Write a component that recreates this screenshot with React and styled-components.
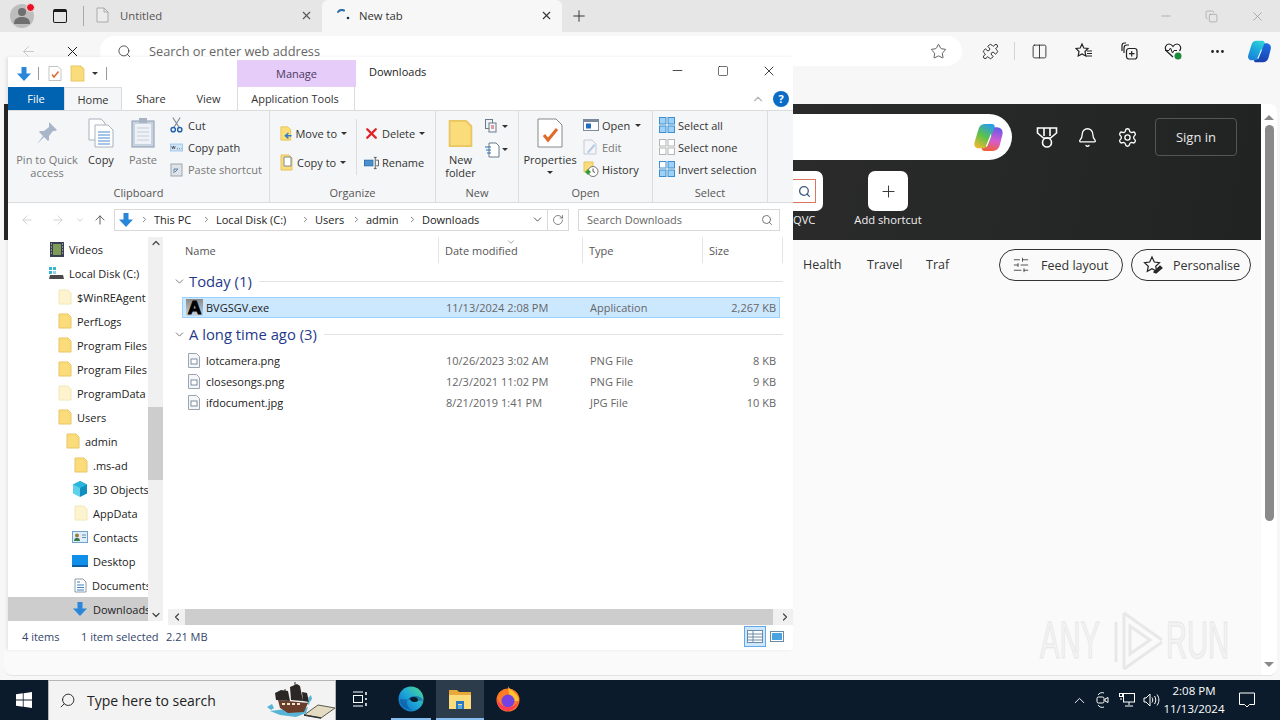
import React from "react";
import styled, { createGlobalStyle } from "styled-components";
import {
  X, ArrowLeft, ArrowRight, ArrowUp, Star, Puzzle, Plus, Search, Bell, Settings,
  ChevronUp, ChevronDown, ChevronLeft, ChevronRight, Minus, Square, Ellipsis, RotateCw,
  Columns2, SlidersHorizontal, Copy,
} from "lucide-react";

const Global = createGlobalStyle`
  html, body { margin: 0; padding: 0; width: 1280px; height: 720px; overflow: hidden; background: #f7f7f7; }
  body { font-family: "Open Sans", "Liberation Sans", sans-serif; font-size: 12px; color: #222; }
  * { box-sizing: border-box; }
`;

const Screen = styled.div`
  position: relative;
  width: 1280px;
  height: 720px;
  display: flex;
  flex-direction: column;
  overflow: hidden;
`;

/* ---------- browser ---------- */
const TabStrip = styled.div`
  height: 32px;
  background: #e6e6e6;
  display: flex;
  align-items: center;
  flex: none;
`;
const Avatar = styled.div`
  position: relative;
  width: 24px;
  height: 24px;
  margin-left: 10px;
  border-radius: 50%;
  background: #bdbdbd;
  display: flex;
  align-items: center;
  justify-content: center;
  &::after {
    content: "";
    position: absolute;
    top: -1px;
    right: -1px;
    width: 7px;
    height: 7px;
    border-radius: 50%;
    background: #e81123;
    border: 1px solid #eee;
  }
`;
const VerticalTabs = styled.div`
  width: 14px;
  height: 14px;
  margin-left: 19px;
  border: 1.6px solid #1a1a1a;
  border-top-width: 3px;
  border-radius: 2px;
`;
const TabDivider = styled.div`
  width: 1px;
  height: 20px;
  margin-left: 16px;
  background: #a8a8a8;
`;
const Tab = styled.div`
  width: ${p => p.$w}px;
  height: 32px;
  display: flex;
  align-items: center;
  padding: 0 9px 2px ${p => (p.$active ? 15 : 12)}px;
  background: ${p => (p.$active ? "#f7f7f7" : "transparent")};
  border-radius: 6px 6px 0 0;
  color: ${p => (p.$active ? "#333" : "#555")};
  font-size: 11.3px;
`;
const TabTitle = styled.span`
  flex: 1;
  margin-left: ${p => p.$ml}px;
`;
const NewTab = styled.div`
  margin-left: 8px;
  display: flex;
  color: #333;
`;
const WinControls = styled.div`
  margin-left: auto;
  display: flex;
  color: #8c8c8c;
  gap: 32px;
  padding-right: 15px;
  align-items: center;
`;
const Toolbar = styled.div`
  height: 38px;
  flex: none;
  display: flex;
  align-items: center;
  padding-left: 20px;
  background: #f7f7f7;
`;
const NavBtn = styled.div`
  width: ${p => p.$w || 44}px;
  display: flex;
  color: ${p => p.$c || "#1a1a1a"};
`;
const AddressPill = styled.div`
  width: 862px;
  height: 30px;
  margin-left: -8px;
  border-radius: 15px;
  background: #fff;
  display: flex;
  align-items: center;
  padding: 0 15px 0 17px;
  color: #666;
  font-size: 12.8px;
`;
const AddressText = styled.span`
  flex: 1;
  margin-left: 17px;
`;
const ToolIcons = styled.div`
  display: flex;
  align-items: center;
  margin-left: 20px;
  color: #222;
`;
const ToolIcon = styled.div`
  width: ${p => p.$w || 44}px;
  display: flex;
  justify-content: center;
`;
const ExtensionSlot = styled.div`
  width: 33px;
  height: 18px;
  margin-right: 2px;
  border-right: 1px solid #d5d5d5;
  display: flex;
  align-items: center;
`;
const Page = styled.div`
  position: relative;
  flex: 1;
  margin: 34px 3px 4px 4px;
  background: #fafafa;
  border-radius: 0 8px 8px 8px;
  border-bottom: 1px solid #e4e4e4;
  display: flex;
  min-height: 0;
`;
const PageBody = styled.div`
  flex: 1;
  min-width: 0;
  display: flex;
  flex-direction: column;
`;
const Hero = styled.div`
  height: 136px;
  background: linear-gradient(100deg, #262626, #2b2b2b 60%, #212323);
  padding: 10px 24px 0 0;
  display: flex;
  flex-direction: column;
  align-items: flex-end;
`;
const HeroTop = styled.div`
  display: flex;
  align-items: center;
  color: #fff;
`;
const HeroSearch = styled.div`
  width: 300px;
  height: 46px;
  margin-right: 15px;
  background: #fff;
  border-radius: 0 23px 23px 0;
  display: flex;
  align-items: center;
  justify-content: flex-end;
  padding-right: 8px;
`;
const HeroIcon = styled.div`
  width: 40px;
  display: flex;
  justify-content: center;
`;
const SignIn = styled.div`
  width: 82px;
  height: 38px;
  margin-left: 8px;
  border: 1px solid #555;
  border-radius: 4px;
  display: flex;
  align-items: center;
  justify-content: center;
  color: #e8e8e8;
  font-size: 13px;
`;
const Shortcuts = styled.div`
  align-self: flex-start;
  margin: 11px 0 0 789px;
  display: flex;
`;
const Shortcut = styled.div`
  width: ${p => p.$w}px;
  display: flex;
  flex-direction: column;
  align-items: ${p => p.$align || "center"};
  gap: 1px;
  color: #f0f0f0;
  font-size: 11.2px;
  white-space: nowrap;
`;
const ShortcutTile = styled.div`
  width: 40px;
  height: 40px;
  flex: none;
  background: #fff;
  border-radius: 7px;
  display: flex;
  align-items: center;
  justify-content: center;
  color: #333;
`;
const QvcTile = styled(ShortcutTile)`
  width: 30px;
  border-radius: 0 7px 7px 0;
  justify-content: flex-start;
  color: #3d5a80;
  span {
    width: 23px;
    height: 24px;
    border: 1px solid #d9785f;
    border-left: none;
    display: flex;
    align-items: center;
    justify-content: center;
  }
`;
const FeedRow = styled.div`
  display: flex;
  align-items: center;
  height: 32px;
  margin-top: 9px;
  padding-left: 799px;
  font-size: 12.5px;
  color: #333;
`;
const FeedLink = styled.span`
  width: ${p => p.$w}px;
  flex: none;
  margin-bottom: 2px;
`;
const FeedSpacer = styled.div`
  width: 49px;
  flex: none;
`;
const Pill = styled.div`
  width: ${p => p.$w}px;
  height: 32px;
  flex: none;
  margin-right: 8px;
  border: 1px solid #333;
  border-radius: 16px;
  display: flex;
  align-items: center;
  padding-left: ${p => p.$pl}px;
  gap: ${p => p.$gap}px;
  font-size: 12.5px;
  color: #333;
`;
const PageScroll = styled.div`
  width: 16px;
  padding-top: 11px;
  display: flex;
  flex-direction: column;
  align-items: center;
  background: #fff;
  border-radius: 0 8px 8px 0;
`;
const PageThumb = styled.div`
  width: 9px;
  height: 396px;
  margin-top: 5px;
  background: #8a8a8a;
  border-radius: 5px;
`;
const PageArrow = styled.div`
  width: 0;
  height: 0;
  border-left: 5px solid transparent;
  border-right: 5px solid transparent;
  ${p => (p.$down ? "border-top: 5px solid #8a8a8a; margin-top: auto; margin-bottom: 8px;" : "border-bottom: 5px solid #8a8a8a;")}
`;
const Watermark = styled.div`
  position: absolute;
  left: 1036px;
  top: 506px;
  display: flex;
  align-items: center;
  color: #f3f3f3;
  font-family: "Liberation Sans", sans-serif;
  font-size: 51px;
  line-height: 62px;
  -webkit-text-stroke: 1px #e6e6e6;
  pointer-events: none;
`;
const WatermarkWord = styled.span`
  display: inline-block;
  width: ${p => p.$w}px;
  transform: scaleX(0.57);
  transform-origin: left center;
  white-space: nowrap;
`;

/* ---------- taskbar ---------- */
const Taskbar = styled.div`
  height: 40px;
  flex: none;
  background: #0b1b2b;
  display: flex;
  align-items: stretch;
  color: #fff;
`;
const StartBtn = styled.div`
  width: 48px;
  display: flex;
  align-items: center;
  justify-content: center;
`;
const TaskSearch = styled.div`
  width: 288px;
  background: #f3f3f3;
  border: 1px solid #b5b5b5;
  border-bottom: none;
  display: flex;
  align-items: center;
  padding-left: 10px;
  color: #222;
  font-size: 14px;
`;
const TaskSearchIcon = styled(Search)`
  flex: none;
  transform: scaleX(-1);
`;
const TaskSearchText = styled.span`
  flex: 1;
  margin-left: 11px;
`;
const TaskBtn = styled.div`
  width: ${p => p.$w || 48}px;
  margin-left: ${p => p.$ml || 0}px;
  display: flex;
  align-items: center;
  justify-content: center;
  background: ${p => (p.$active ? "#2c3c4b" : "transparent")};
  border-bottom: 2px solid ${p => (p.$open ? "#86bdf0" : "transparent")};
`;
const Tray = styled.div`
  margin-left: auto;
  display: flex;
  align-items: center;
  color: #fff;
`;
const TrayIcon = styled.div`
  width: 24px;
  display: flex;
  justify-content: center;
`;
const Clock = styled.div`
  width: 62px;
  text-align: center;
  font-size: 11.5px;
  line-height: 18px;
  white-space: nowrap;
`;
const NotifyBtn = styled.div`
  width: 55px;
  padding-right: 11px;
  display: flex;
  justify-content: center;
`;

/* ---------- explorer window ---------- */
const Window = styled.div`
  position: absolute;
  left: 8px;
  top: 57px;
  width: 785px;
  height: 593px;
  background: #fff;
  box-shadow: -2px 0 3px rgba(0, 0, 0, 0.08);
  display: flex;
  flex-direction: column;
  font-size: 11px;
  color: #333;
`;
const TitleRow = styled.div`
  height: 30px;
  flex: none;
  display: flex;
  align-items: flex-end;
  padding-left: 8px;
`;
const Qat = styled.div`
  width: 221px;
  height: 27px;
  display: flex;
  align-items: center;
  gap: 6px;
`;
const QatSep = styled.div`
  width: 1px;
  height: 13px;
  margin: 0 ${p => p.$mr || 0}px 0 ${p => p.$ml || 0}px;
  background: #999;
`;
const QatItem = styled.div`
  display: flex;
  margin-left: ${p => p.$ml || 0}px;
`;
const Caret = styled.div`
  width: 0;
  height: 0;
  flex: none;
  margin-left: ${p => p.$ml || 0}px;
  margin-top: ${p => p.$mt || 0}px;
  border-left: 3px solid transparent;
  border-right: 3px solid transparent;
  border-top: 3px solid ${p => p.$c || "#333"};
`;
const ManageTab = styled.div`
  width: 119px;
  height: 27px;
  background: #e6ccf8;
  color: #4b3a63;
  display: flex;
  align-items: center;
  justify-content: center;
`;
const WindowTitle = styled.div`
  flex: 1;
  height: 27px;
  display: flex;
  align-items: center;
  padding: 0 0 5px 13px;
  color: #222;
`;
const WindowBtns = styled.div`
  display: flex;
  align-items: center;
  gap: 32px;
  height: 30px;
  padding: 0 16px 3px 0;
  color: #111;
`;
const TabsRow = styled.div`
  height: 23px;
  flex: none;
  display: flex;
  align-items: stretch;
  position: relative;
`;
const FileTab = styled.div`
  width: 56px;
  background: #0063b1;
  color: #fff;
  display: flex;
  align-items: center;
  justify-content: center;
`;
const RibbonTab = styled.div`
  width: ${p => p.$w}px;
  display: flex;
  align-items: center;
  justify-content: center;
  color: #333;
  ${p => p.$active && "background: #f5f6f7; border: 1px solid #dadbdc; border-bottom: none;"}
  ${p => p.$context && "border-left: 1px solid #dadbdc; border-right: 1px solid #dadbdc; padding-right: 2px;"}
`;
const RibbonEnd = styled.div`
  margin-left: auto;
  display: flex;
  align-items: center;
  gap: 8px;
  padding-right: 4px;
  color: #b5b5b5;
`;
const Help = styled.div`
  width: 16px;
  height: 16px;
  border-radius: 50%;
  background: #0a6cc4;
  color: #fff;
  font-size: 11px;
  font-weight: 700;
  display: flex;
  align-items: center;
  justify-content: center;
`;
const Ribbon = styled.div`
  height: 93px;
  flex: none;
  display: flex;
  background: #f5f6f7;
  border-top: 1px solid #dadbdc;
  border-bottom: 1px solid #dadbdc;
`;
const Group = styled.div`
  width: ${p => p.$w}px;
  flex: none;
  display: flex;
  flex-direction: column;
  border-right: 1px solid #dcdddf;
`;
const GroupBody = styled.div`
  flex: 1;
  display: flex;
  padding: ${p => p.$pad || "2px 0 0 0"};
`;
const GroupLabel = styled.div`
  height: 17px;
  text-align: center;
  color: #555;
`;
const Big = styled.div`
  width: ${p => p.$w}px;
  margin-right: ${p => p.$mr || 0}px;
  display: flex;
  flex-direction: column;
  align-items: center;
  text-align: center;
  line-height: 13px;
  color: ${p => (p.$dim ? "#777" : "#333")};
`;
const BigIcon = styled.div`
  height: 40px;
  display: flex;
  align-items: center;
  justify-content: center;
`;
const Stack = styled.div`
  display: flex;
  flex-direction: column;
  flex: none;
  margin-top: ${p => p.$mt || 0}px;
  ${p => p.$w && `width: ${p.$w}px;`}
`;
const Small = styled.div`
  height: ${p => p.$h || 22}px;
  display: flex;
  align-items: center;
  gap: ${p => p.$gap || 5}px;
  white-space: nowrap;
  color: ${p => (p.$dim ? "#777" : "#333")};
`;
const IconBox = styled.div`
  width: 13px;
  display: flex;
  justify-content: center;
  flex: none;
`;
const DeleteMark = styled(X)`
  flex: none;
  margin: 0 -1px;
`;
const InnerSep = styled.div`
  width: 1px;
  height: 56px;
  margin: 0 7px 0 9px;
  background: #dcdddf;
`;
const AddressRow = styled.div`
  height: 32px;
  flex: none;
  display: flex;
  align-items: center;
  padding-top: 1px;
`;
const ArrowBtn = styled.div`
  width: ${p => p.$w}px;
  display: flex;
  justify-content: center;
  color: ${p => p.$c};
`;
const AddressBox = styled.div`
  width: 434px;
  height: 22px;
  margin-left: 4px;
  border: 1px solid #d9d9d9;
  display: flex;
  align-items: center;
  padding-left: 3px;
  color: #222;
`;
const Crumb = styled.span`
  width: ${p => p.$w}px;
  flex: none;
  white-space: nowrap;
`;
const CrumbArrow = styled.span`
  width: 20px;
  flex: none;
  display: flex;
  justify-content: center;
  color: #777;
`;
const AddrEnd = styled.div`
  margin-left: auto;
  width: 20px;
  display: flex;
  justify-content: center;
  color: #555;
`;
const RefreshBox = styled.div`
  width: 21px;
  height: 22px;
  border: 1px solid #d9d9d9;
  border-left: none;
  display: flex;
  align-items: center;
  justify-content: center;
  color: #555;
`;
const SearchBox = styled.div`
  width: 202px;
  height: 22px;
  margin-left: 9px;
  border: 1px solid #d9d9d9;
  display: flex;
  align-items: center;
  justify-content: space-between;
  padding: 0 6px 0 8px;
  color: #666;
`;
const Main = styled.div`
  flex: 1;
  min-height: 0;
  display: flex;
`;
const NavPane = styled.div`
  width: 140px;
  flex: none;
  padding-top: 2px;
  overflow: hidden;
  display: flex;
  flex-direction: column;
`;
const NavItem = styled.div`
  height: 24px;
  flex: none;
  display: flex;
  align-items: center;
  padding-left: ${p => p.$x}px;
  gap: 5px;
  white-space: nowrap;
  overflow: hidden;
  color: #222;
  background: ${p => (p.$selected ? "#cdcdcd" : "transparent")};
`;
const NavScroll = styled.div`
  width: 15px;
  height: 384px;
  margin-top: 2px;
  flex: none;
  background: #f0f0f0;
  display: flex;
  flex-direction: column;
  align-items: center;
  justify-content: space-between;
  color: #444;
`;
const NavThumbWrap = styled.div`
  flex: 1;
  width: 100%;
  padding: 158px 0 129px;
  display: flex;
`;
const NavThumb = styled.div`
  flex: 1;
  background: #cdcdcd;
`;
const Content = styled.div`
  flex: 1;
  min-width: 0;
  display: flex;
  flex-direction: column;
  position: relative;
`;
const ColumnHeader = styled.div`
  height: 33px;
  flex: none;
  display: grid;
  grid-template-columns: 276px 144px 120px 80px;
  color: #555;
`;
const ColCell = styled.div`
  padding-left: ${p => (p.$first ? 22 : 6)}px;
  margin-top: 2px;
  height: 26px;
  border-right: 1px solid #e5e5e5;
  display: flex;
  align-items: center;
`;
const SortMark = styled.div`
  position: absolute;
  left: 343px;
  top: 0;
  color: #999;
`;
const GroupHead = styled.div`
  height: ${p => p.$h}px;
  margin: 0 10px ${p => p.$mb || 0}px 0;
  flex: none;
  display: flex;
  align-items: center;
  padding-left: 10px;
  gap: 3px;
  color: #1f3a8a;
  font-size: 14.8px;
  &::after {
    content: "";
    flex: 1;
    height: 1px;
    background: #e2e2e2;
    margin-left: 4px;
  }
`;
const FileRow = styled.div`
  height: 21px;
  flex: none;
  width: 598px;
  margin-left: 19px;
  display: grid;
  grid-template-columns: 257px 144px 120px 72px;
  align-items: center;
  color: #666;
  border: 1px solid ${p => (p.$selected ? "#99d1ff" : "transparent")};
  background: ${p => (p.$selected ? "#cce8ff" : "transparent")};
`;
const FileName = styled.div`
  display: flex;
  align-items: center;
  gap: ${p => p.$gap}px;
  padding-left: ${p => p.$pl}px;
  color: #222;
`;
const FileDate = styled.div`
  padding-left: 6px;
`;
const FileType = styled.div`
  padding-left: 6px;
`;
const FileSize = styled.div`
  text-align: right;
`;
const ExeGlyph = styled.span`
  width: 17px;
  height: 17px;
  flex: none;
  background: linear-gradient(#8a8a8a, #c4d6e4);
  color: #000;
  font-family: "Liberation Sans", sans-serif;
  font-weight: 700;
  font-size: 19px;
  line-height: 17px;
  text-align: center;
  -webkit-text-stroke: 1px #000;
`;
const HScroll = styled.div`
  position: absolute;
  left: 0;
  right: 0;
  bottom: 0;
  height: 16px;
  background: #f0f0f0;
  margin-left: 5px;
  display: flex;
  align-items: center;
  justify-content: space-between;
  color: #444;
`;
const HThumb = styled.div`
  width: 588px;
  height: 16px;
  margin-right: auto;
  background: #cdcdcd;
`;
const HArrow = styled.div`
  width: 17px;
  display: flex;
  justify-content: center;
`;
const StatusBar = styled.div`
  height: 25px;
  flex: none;
  display: flex;
  align-items: center;
  padding: 0 0 3px 14px;
  color: #33456a;
`;
const StatusItem = styled.span`
  width: ${p => p.$w}px;
  flex: none;
`;
const ViewToggles = styled.div`
  margin-left: auto;
  display: flex;
  align-items: center;
  gap: 4px;
  padding-right: 9px;
`;
const ViewBtn = styled.div`
  width: ${p => (p.$active ? 22 : 14)}px;
  height: 21px;
  display: flex;
  align-items: center;
  justify-content: center;
  ${p => p.$active && "background: #cce8ff; border: 1px solid #66a7e8;"}
`;

/* ---------- drawings ---------- */
const Folder = ({ faded, size = 16 }) => (
  <svg width={size - 2} height={size} viewBox="0 0 14 16" style={{ flex: "none" }}>
    <path d="M1 1h9l3 3v11H1z" fill={faded ? "#fdf3cf" : "#fbdc7a"} stroke={faded ? "#f3e6b8" : "#e9c662"} />
  </svg>
);
const DownloadArrow = ({ size = 16 }) => (
  <svg width={size} height={size} viewBox="0 0 16 16" style={{ flex: "none" }}>
    <path d="M5.500 1h5v6.500H15L8 15 1 7.500h4.500z" fill="#2a86d8" />
  </svg>
);
const FileDoc = () => (
  <svg width="12" height="15" viewBox="0 0 12 15">
    <path d="M.5.500h8l3 3v11H.5z" fill="#f4f6f8" stroke="#9aa5b1" />
    <rect x="3" y="6" width="6" height="5" fill="#fff" stroke="#7c8ea3" />
  </svg>
);
const PropsIcon = ({ size = 1 }) => (
  <svg width={28 * size} height={30 * size} viewBox="0 0 28 30">
    <path d="M2 1h18l6 6v22H2z" fill="#fff" stroke="#888" />
    <path d="M8 17l4 5 9-11" fill="none" stroke="#e06a2b" strokeWidth="3" />
  </svg>
);
const CopilotMark = ({ id, size, a, b, c, d, e, f }) => (
  <svg width={size} height={size} viewBox="0 0 30 30">
    <defs>
      <linearGradient id={`${id}L`} x1=".7" y1="0" x2=".2" y2="1">
        <stop offset="0" stopColor={a} />
        <stop offset=".5" stopColor={b} />
        <stop offset="1" stopColor={c} />
      </linearGradient>
      <linearGradient id={`${id}R`} x1=".6" y1="0" x2=".4" y2="1">
        <stop offset="0" stopColor={d} />
        <stop offset=".55" stopColor={e} />
        <stop offset="1" stopColor={f} />
      </linearGradient>
    </defs>
    <path d="M20 5h3c4 0 6.500 3 5.500 7L26 22c-1 4-3.500 6-7 6h-8c-2 0-3-1.500-2.500-3.500L15 10c1-3 2.500-5 5-5z" fill={`url(#${id}R)`} />
    <path d="M11 2h7c2.500 0 3.500 1.500 2.800 3.500L15 21c-1 3-3 4.500-5.500 4.500H6c-3.500 0-5.500-2.500-4.500-6L5 8c1-4 3-6 6-6z" fill={`url(#${id}L)`} />
    <path d="M17.500 11l-4.500 11c-.5 1-.5 2 .5 2l4-10z" fill="#fff" />
  </svg>
);
const Medal = () => (
  <svg width="22" height="22" viewBox="0 0 22 22" fill="none" stroke="currentColor" strokeWidth="1.600">
    <path d="M1.500 2h19v5l-6 5h-7l-6-5z" />
    <path d="M8 2v8M14 2v8" />
    <circle cx="11" cy="16.500" r="4.500" />
  </svg>
);
const FavList = () => (
  <svg width="18" height="18" viewBox="0 0 18 18" fill="none" stroke="currentColor" strokeWidth="1.200">
    <path d="M7 2l1.800 4 4.200.5-3 3 .8 4.500L7 12l-3.800 2 .8-4.500-3-3L5.200 6z" />
    <path d="M12 9h5M12 11.500h5M11 14h6" />
  </svg>
);
const Collections = () => (
  <svg width="18" height="18" viewBox="0 0 18 18" fill="none" stroke="currentColor" strokeWidth="1.200">
    <path d="M6 1H4.500C3 1 2 2 2 3.500V9" />
    <path d="M4 11V6c0-2 1-3 3-3h2" />
    <rect x="6.500" y="6.500" width="10.500" height="10.500" rx="2.500" />
    <path d="M11.700 9v5.500M9 11.700h5.500" />
  </svg>
);
const Health = () => (
  <svg width="19" height="19" viewBox="0 0 19 19" fill="none">
    <path d="M9 15L2.500 9C0 6 2 2 5 2c2 0 3 1 4 2.500C10 3 11 2 13 2c3 0 5 4 2.500 7" stroke="#222" strokeWidth="1.200" />
    <path d="M1 8.500h4l1.500-2.500 2 5 1.500-2.500h3" stroke="#222" strokeWidth="1" />
    <circle cx="14" cy="14" r="3.500" fill="#1b8a3a" />
  </svg>
);
const Spinner = () => (
  <svg width="14" height="12" viewBox="0 0 14 12" fill="none">
    <path d="M1 3c1.500-2 4-2.500 6-1.500" stroke="#2b6fa8" strokeWidth="2" strokeLinecap="round" />
    <circle cx="11" cy="9" r="1.300" fill="#1d3557" />
  </svg>
);
const PersonShape = () => (
  <svg width="16" height="18" viewBox="0 0 16 18" fill="#6f6f6f">
    <circle cx="8" cy="5" r="4" />
    <path d="M0 17c0-5 3-7 8-7s8 2 8 7z" />
  </svg>
);
const Doc = () => (
  <svg width="13" height="16" viewBox="0 0 13 16" fill="#ececec" stroke="#aaa">
    <path d="M1 1h7l4 4v10H1z" />
    <path d="M8 1v4h4" fill="none" />
  </svg>
);
const PenStar = () => (
  <svg width="20" height="20" viewBox="0 0 20 20" fill="none" stroke="#222" strokeWidth="1.200">
    <path d="M9 2l2.300 5 5.200.6-3.800 3.600 1 5.200L9 13.800l-4.700 2.600 1-5.200L1.500 7.600 6.700 7z" />
    <path d="M11 17l6-6 2 2-6 5z" fill="#333" />
  </svg>
);
const Pin = () => (
  <svg width="22" height="24" viewBox="0 0 22 24">
    <path d="M13 1l8 8-2 1-2 0-4 5 0 4-1 1-4-4-7 7 6-8-4-4 1-1 4 0 5-4 0-2z" fill="#a9b6c9" />
  </svg>
);
const Pages = () => (
  <svg width="26" height="30" viewBox="0 0 26 30">
    <path d="M1 1h12l4 4v17H1z" fill="#fff" stroke="#a7b2bf" />
    <path d="M7 7h13l5 5v17H7z" fill="#fff" stroke="#a7b2bf" />
    <path d="M10 14h12M10 17h12M10 20h12M10 23h12M10 26h12" stroke="#4b8bd0" />
  </svg>
);
const Clipboard = () => (
  <svg width="24" height="30" viewBox="0 0 24 30">
    <rect x="1" y="3" width="22" height="26" fill="#c8d3e0" stroke="#8b9bb0" />
    <rect x="4" y="6" width="16" height="20" fill="#eef2f7" />
    <path d="M6 10h12M6 14h12M6 18h12M6 22h12" stroke="#c3cdd9" />
    <rect x="8" y="0" width="8" height="5" fill="#a8b4c4" />
  </svg>
);
const Scissors = () => (
  <svg width="14" height="16" viewBox="0 0 14 16" fill="none">
    <path d="M3 0l7 11M11 0L4 11" stroke="#7d8a99" strokeWidth="1.200" />
    <circle cx="3.500" cy="13" r="2.300" stroke="#1f5fae" strokeWidth="1.500" />
    <circle cx="10.500" cy="13" r="2.300" stroke="#1f5fae" strokeWidth="1.500" />
  </svg>
);
const PathBadge = () => (
  <svg width="15" height="9" viewBox="0 0 15 9">
    <rect x=".5" y=".5" width="14" height="8" fill="#cfe4f7" stroke="#9cc4e6" />
    <path d="M2 3l1 3 1-3 1 3 1-3M8 6h1M10.500 6h1M13 6h.5" stroke="#333" fill="none" strokeWidth=".8" />
  </svg>
);
const ShortcutDoc = () => (
  <svg width="13" height="15" viewBox="0 0 13 15">
    <rect x="1" y="2" width="11" height="12" fill="#dfe3e8" stroke="#9aa5b1" />
    <path d="M4 11V7h4M8 7l-3 3" stroke="#5a7fa8" fill="none" />
  </svg>
);
const MoveTo = ({ copy }) => (
  <svg width="14" height="17" viewBox="0 0 14 17">
    <path d="M1 1h8l3 3v12H1z" fill="#fbdc7a" stroke="#e6c35a" />
    {copy
      ? <path d="M4 3h7v9H4z" fill="#fff" stroke="#7d8a99" />
      : <path d="M13 11H7M9.500 8L6 11l3.500 3" stroke="#2a78c8" strokeWidth="1.500" fill="none" />}
  </svg>
);
const Rename = () => (
  <svg width="15" height="14" viewBox="0 0 16 14" fill="none">
    <rect x=".5" y="4" width="9" height="6" fill="#4a8fd0" stroke="#2a6fae" />
    <path d="M12 1v12M10.500 1h3M10.500 13h3M13 4h2.500v6H13" stroke="#555" />
  </svg>
);
const NewItem = () => (
  <svg width="15" height="16" viewBox="0 0 15 16" fill="none" stroke="#6b7a8a">
    <rect x=".5" y=".5" width="7" height="9" fill="#eef2f6" />
    <rect x="4" y="4" width="7" height="9" fill="#f5f6f7" />
    <path d="M6 7h3M6 9h3" stroke="#c44" />
  </svg>
);
const EasyAccess = () => (
  <svg width="15" height="16" viewBox="0 0 15 16" fill="none">
    <path d="M4 1h7l3 3v11H4z" fill="#fff" stroke="#6b7a8a" />
    <path d="M0 5h6M1 8h5M2 11h4" stroke="#2a6fae" />
  </svg>
);
const OpenWin = () => (
  <svg width="16" height="12" viewBox="0 0 16 12">
    <rect x=".5" y=".5" width="15" height="11" fill="#fff" stroke="#7d8a99" />
    <rect x="1" y="1" width="14" height="2" fill="#7d8a99" />
    <rect x="3" y="4.500" width="5" height="5" fill="#1f6fbe" />
  </svg>
);
const EditDoc = () => (
  <svg width="14" height="16" viewBox="0 0 14 16">
    <path d="M1 1h8l4 4v10H1z" fill="#f3f5f8" stroke="#c3ccd8" />
    <path d="M4 13l7-8 1.500 1.500-7 8z" fill="#b8cbe6" />
  </svg>
);
const HistoryIcon = () => (
  <svg width="16" height="16" viewBox="0 0 16 16">
    <path d="M1 1h9v10H1z" fill="#fbdc7a" stroke="#e6c35a" />
    <circle cx="10" cy="10.500" r="5" fill="#fff" stroke="#777" />
    <path d="M10 7.500v3l2 1" stroke="#555" fill="none" />
    <path d="M2 11l3-3 3 3-3 3z" fill="#3a9a3a" />
  </svg>
);
const SelectGrid = ({ kind }) => {
  const on = i => kind === "all" || (kind === "inv" && i !== 0);
  return (
    <svg width="16" height="16" viewBox="0 0 16 16">
      {[[0, 0], [8.5, 0], [0, 8.5], [8.5, 8.5]].map(([x, y], i) => (
        <rect key={i} x={x + .5} y={y + .5} width="6.500" height="6.500"
          fill={on(i) ? "#9fd0f5" : "#fff"} stroke={kind === "none" ? "#b5b5b5" : "#3d8fd1"} />
      ))}
    </svg>
  );
};
const VideoIcon = () => (
  <svg width="14" height="15" viewBox="0 0 14 15" style={{ flex: "none" }}>
    <rect width="14" height="15" fill="#3a3f52" />
    <rect x="3" y="2" width="8" height="11" fill="#7e9c55" />
    <path d="M1 2h1M1 5h1M1 8h1M1 11h1M12 2h1M12 5h1M12 8h1M12 11h1" stroke="#ddd" />
  </svg>
);
const DiskIcon = () => (
  <svg width="15" height="13" viewBox="0 0 15 13" style={{ flex: "none" }}>
    <rect x="0" y="0" width="3" height="3" fill="#39b4d4" />
    <rect x="4" y="0" width="3" height="3" fill="#39b4d4" />
    <rect x="0" y="4" width="3" height="3" fill="#39b4d4" />
    <rect x="4" y="4" width="3" height="3" fill="#8fd3e8" />
    <path d="M1 8h13l1 4H0z" fill="#4a4a4a" />
  </svg>
);
const Cube = () => (
  <svg width="16" height="16" viewBox="0 0 16 16" style={{ flex: "none" }}>
    <path d="M8 0l7 3.500v9L8 16z" fill="#0e8fc0" />
    <path d="M8 0L1 3.500v9L8 16z" fill="#5fd0ea" />
    <path d="M1 3.500L8 7l7-3.500L8 0z" fill="#2bb5dd" />
  </svg>
);
const ContactCard = () => (
  <svg width="16" height="12" viewBox="0 0 16 12" style={{ flex: "none" }}>
    <rect x=".5" y=".5" width="15" height="11" fill="#dfeefa" stroke="#6ea3cf" />
    <circle cx="5" cy="4.500" r="2" fill="#9a7b3a" />
    <path d="M2 10c0-2.500 1.500-3 3-3s3 .5 3 3z" fill="#3a7a4a" />
    <path d="M10 4h4M10 6.500h4" stroke="#6a8aa8" />
  </svg>
);
const DesktopIcon = () => (
  <svg width="16" height="12" viewBox="0 0 16 12" style={{ flex: "none" }}>
    <rect width="16" height="12" fill="#0f8fe8" />
    <rect y="10" width="16" height="2" fill="#0a5fa8" />
  </svg>
);
const DocumentsIcon = () => (
  <svg width="13" height="15" viewBox="0 0 13 15" style={{ flex: "none" }}>
    <path d="M1 1h8l3 3v10H1z" fill="#fff" stroke="#8a9aaa" />
    <path d="M3 4h3M3 7h7M3 9.500h7M3 12h7" stroke="#3f7fbf" />
  </svg>
);
const DetailsView = () => (
  <svg width="16" height="13" viewBox="0 0 16 13">
    <rect x=".5" y=".5" width="15" height="12" fill="#fff" stroke="#6a8aa8" />
    <path d="M1 4h14M1 7h14M1 10h14M6 1v11" stroke="#6a8aa8" />
  </svg>
);
const LargeView = () => (
  <svg width="14" height="11" viewBox="0 0 14 11">
    <rect x=".5" y=".5" width="13" height="10" fill="#fff" stroke="#6a8aa8" />
    <rect x="2" y="2" width="10" height="7" fill="#4aa3df" />
  </svg>
);
const WindowsLogo = () => (
  <svg width="16" height="16" viewBox="0 0 16 16" fill="#fff">
    <path d="M0 2.300L6.800 1.300V7.600H0zM7.600 1.200L16 0V7.600H7.600zM0 8.400H6.800V14.700L0 13.700zM7.600 8.400H16V16L7.600 14.800z" />
  </svg>
);
const PirateShip = () => (
  <svg width="70" height="38" viewBox="5 1 70 38" style={{ flex: "none" }}>
    <path d="M44 34l14-10 17 3-14 10z" fill="#e4dcc2" stroke="#5b5a4c" />
    <path d="M44 34l17 3" stroke="#333" strokeWidth="1.500" />
    <path d="M7 26l5-3 2 4-3 2zM10 30l16-2 14 1 8-3-2 6-10 4-16-2z" fill="#58b4d6" />
    <path d="M48 17l3-3 1 4-2 3zM46 22l4-2-1 4z" fill="#58b4d6" />
    <path d="M18 19l30 3-4 9-16 1-8-5z" fill="#6a3c2a" />
    <path d="M22 23h20" stroke="#ece5d0" strokeWidth="2" strokeDasharray="3 2" />
    <path d="M15 12l6-3 7 1 2 10-14-1zM30 6l7-3 3 2 3 15-12-1zM42 11l5 1 2 9-6-1z" fill="#2b2724" />
    <path d="M35 1v5M25 8v4" stroke="#2b2724" />
  </svg>
);
const TaskViewIcon = () => (
  <svg width="16" height="16" viewBox="0 0 16 16" fill="none" stroke="#fff">
    <path d="M1 1h10M1 15h10" />
    <rect x="1.500" y="4.500" width="9" height="7" />
    <path d="M14 1v3M14 7v2M14 12v3" strokeWidth="1.500" />
  </svg>
);
const EdgeIcon = () => (
  <svg width="26" height="26" viewBox="0 0 26 26">
    <defs>
      <linearGradient id="edgeG" x1="1" y1="0" x2="0" y2="1">
        <stop offset="0" stopColor="#4fdc8c" />
        <stop offset=".5" stopColor="#1da6d8" />
        <stop offset="1" stopColor="#0b63b8" />
      </linearGradient>
    </defs>
    <circle cx="13" cy="13" r="12.500" fill="url(#edgeG)" />
    <path d="M25 15c-1-4-5-5-8-5-5 0-8 3-8 7 0 3 2 6 6 7-7 0-13-4-13-11" fill="#0c4f9c" opacity=".55" />
    <path d="M12 12c3-2 8-1 8 2 0 1-1 2-3 2-4 0-5-2-5-4z" fill="#0b1b2b" />
  </svg>
);
const FolderApp = () => (
  <svg width="24" height="22" viewBox="0 0 24 22">
    <path d="M1 2h8l2 2h12v5H1z" fill="#e9a93a" />
    <path d="M1 7h22v14H1z" fill="#fbdc7a" />
    <path d="M8 13h8v8h-2v-5h-4v5H8z" fill="#2a78c8" />
    <rect x="10" y="17" width="4" height="4" fill="#5aa8e0" />
  </svg>
);
const FirefoxIcon = () => (
  <svg width="24" height="26" viewBox="0 0 24 26">
    <circle cx="12" cy="14" r="11.500" fill="#ff7b26" />
    <path d="M12 0c1 3 4 4 7 7 2 2 4 5 4 8H14z" fill="#ffc12e" />
    <circle cx="12" cy="15" r="6.500" fill="#7342e0" />
    <path d="M1 12c2 7 8 10 14 9 4-1 7-4 8-8-1 8-7 12-12 12S1 20 1 12z" fill="#ff3b54" />
  </svg>
);
const MeetNow = () => (
  <svg width="14" height="18" viewBox="0 0 14 18" fill="none" stroke="#fff">
    <path d="M2 4C3 2 6 1 8 2M2 14c1 2 4 3 6 2" />
    <rect x="1" y="6" width="7" height="6" rx="1.500" />
    <path d="M9 8l3-1.500v5L9 10z" />
  </svg>
);
const NetworkIcon = () => (
  <svg width="16" height="16" viewBox="0 0 16 16" fill="none" stroke="#fff">
    <rect x="4.500" y="1.500" width="11" height="8.500" />
    <path d="M10 10v3M6 14h8" />
    <rect x=".5" y="1.500" width="3" height="3" fill="#0b1b2b" />
    <path d="M1 7h2" />
  </svg>
);
const VolumeIcon = () => (
  <svg width="17" height="14" viewBox="0 0 17 14" fill="none" stroke="#fff">
    <path d="M1 5h2l4-4v12l-4-4H1z" />
    <path d="M9 4.500c1 1.500 1 3.500 0 5M11.500 3c1.700 2.500 1.700 5.500 0 8M14 1.500c2.500 3.500 2.500 7.500 0 11" />
  </svg>
);
const NotifyIcon = () => (
  <svg width="16" height="16" viewBox="0 0 16 16" fill="none" stroke="#fff">
    <path d="M.5 1h15v11.500h-5L8 15l-2.500-2.500h-5z" />
  </svg>
);
const PlayMark = () => (
  <svg width="56" height="62" viewBox="0 0 56 62" fill="none" stroke="#e8e8e8" strokeWidth="3">
    <path d="M6 12v40M14 3l38 27M14 59l38-27M14 3v56" />
    <path d="M20 16l20 14-20 14z" />
  </svg>
);

const navItems = [
  { x: 42, label: "Videos", icon: <VideoIcon /> },
  { x: 41, label: "Local Disk (C:)", icon: <DiskIcon /> },
  { x: 50, label: "$WinREAgent", icon: <Folder faded /> },
  { x: 50, label: "PerfLogs", icon: <Folder /> },
  { x: 50, label: "Program Files", icon: <Folder /> },
  { x: 50, label: "Program Files", icon: <Folder /> },
  { x: 50, label: "ProgramData", icon: <Folder faded /> },
  { x: 50, label: "Users", icon: <Folder /> },
  { x: 58, label: "admin", icon: <Folder /> },
  { x: 66, label: ".ms-ad", icon: <Folder /> },
  { x: 64, label: "3D Objects", icon: <Cube /> },
  { x: 66, label: "AppData", icon: <Folder faded /> },
  { x: 64, label: "Contacts", icon: <ContactCard /> },
  { x: 64, label: "Desktop", icon: <DesktopIcon /> },
  { x: 66, label: "Documents", icon: <DocumentsIcon /> },
  { x: 64, label: "Downloads", icon: <DownloadArrow />, selected: true },
];

const oldFiles = [
  { name: "lotcamera.png", date: "10/26/2023 3:02 AM", type: "PNG File", size: "8 KB" },
  { name: "closesongs.png", date: "12/3/2021 11:02 PM", type: "PNG File", size: "9 KB" },
  { name: "ifdocument.jpg", date: "8/21/2019 1:41 PM", type: "JPG File", size: "10 KB" },
];

const crumbs = [
  { label: "This PC", w: 42 },
  { label: "Local Disk (C:)", w: 79 },
  { label: "Users", w: 31 },
  { label: "admin", w: 36 },
  { label: "Downloads", w: 70 },
];

const Browser = () => (
  <>
    <TabStrip>
      <Avatar><PersonShape /></Avatar>
      <VerticalTabs />
      <TabDivider />
      <Tab $w={238}>
        <Doc />
        <TabTitle $ml={11}>Untitled</TabTitle>
        <X size={13} />
      </Tab>
      <Tab $active $w={240}>
        <Spinner />
        <TabTitle $ml={8}>New tab</TabTitle>
        <X size={13} />
      </Tab>
      <NewTab><Plus size={18} strokeWidth={1.3} /></NewTab>
      <WinControls>
        <Minus size={14} strokeWidth={1} />
        <Copy size={13} strokeWidth={1} />
        <X size={15} strokeWidth={1} />
      </WinControls>
    </TabStrip>
    <Toolbar>
      <NavBtn $w={44} $c="#c8c8c8"><ArrowLeft size={17} strokeWidth={1.4} /></NavBtn>
      <NavBtn><X size={17} strokeWidth={1.4} /></NavBtn>
      <AddressPill>
        <Search size={15} strokeWidth={1.3} color="#333" />
        <AddressText>Search or enter web address</AddressText>
        <Star size={17} strokeWidth={1.2} color="#444" />
      </AddressPill>
      <ToolIcons>
        <ExtensionSlot><Puzzle size={17} strokeWidth={1.3} /></ExtensionSlot>
        <ToolIcon><Columns2 size={17} strokeWidth={1.2} /></ToolIcon>
        <ToolIcon $w={46}><FavList /></ToolIcon>
        <ToolIcon><Collections /></ToolIcon>
        <ToolIcon><Health /></ToolIcon>
        <ToolIcon><Ellipsis size={17} /></ToolIcon>
        <ToolIcon $w={40}>
          <CopilotMark id="cpTool" size={25} a="#2fd0d8" b="#1aa5dc" c="#1d7fd8" d="#1f6fe0" e="#1a55c8" f="#1a3fa8" />
        </ToolIcon>
      </ToolIcons>
    </Toolbar>
    <Page>
      <PageBody>
        <Hero>
          <HeroTop>
            <HeroSearch>
              <CopilotMark id="cpHero" size={31} a="#2a9de8" b="#5cc24a" c="#f2b82e" d="#6a5be8" e="#d65ad0" f="#f0603a" />
            </HeroSearch>
            <HeroIcon><Medal /></HeroIcon>
            <HeroIcon><Bell size={21} strokeWidth={1.5} /></HeroIcon>
            <HeroIcon><Settings size={21} strokeWidth={1.5} /></HeroIcon>
            <SignIn>Sign in</SignIn>
          </HeroTop>
          <Shortcuts>
            <Shortcut $w={75} $align="flex-start">
              <QvcTile><span><Search size={13} strokeWidth={2.4} /></span></QvcTile>
              QVC
            </Shortcut>
            <Shortcut $w={40}>
              <ShortcutTile><Plus size={19} strokeWidth={1.2} /></ShortcutTile>
              Add shortcut
            </Shortcut>
          </Shortcuts>
        </Hero>
        <FeedRow>
          <FeedLink $w={64}>Health</FeedLink>
          <FeedLink $w={59}>Travel</FeedLink>
          <FeedLink $w={24}>Traf</FeedLink>
          <FeedSpacer />
          <Pill $w={124} $pl={12} $gap={11}><SlidersHorizontal size={18} strokeWidth={1.1} />Feed layout</Pill>
          <Pill $w={120} $pl={11} $gap={10}><PenStar />Personalise</Pill>
        </FeedRow>
      </PageBody>
      <PageScroll>
        <PageArrow />
        <PageThumb />
        <PageArrow $down />
      </PageScroll>
      <Watermark>
        <WatermarkWord $w={70}>ANY</WatermarkWord>
        <PlayMark />
        <WatermarkWord $w={70}>RUN</WatermarkWord>
      </Watermark>
    </Page>
  </>
);

const Explorer = () => (
  <Window>
    <TitleRow>
      <Qat>
        <DownloadArrow size={16} />
        <QatSep />
        <QatItem $ml={3}><PropsIcon size={.5} /></QatItem>
        <QatItem $ml={2}><Folder size={17} /></QatItem>
        <Caret $ml={1} />
        <QatSep $ml={2} />
      </Qat>
      <ManageTab>Manage</ManageTab>
      <WindowTitle>Downloads</WindowTitle>
      <WindowBtns>
        <Minus size={15} strokeWidth={1.2} />
        <Square size={12} strokeWidth={1.2} />
        <X size={16} strokeWidth={1.2} />
      </WindowBtns>
    </TitleRow>
    <TabsRow>
      <FileTab>File</FileTab>
      <RibbonTab $w={58} $active>Home</RibbonTab>
      <RibbonTab $w={58}>Share</RibbonTab>
      <RibbonTab $w={57}>View</RibbonTab>
      <RibbonTab $w={118} $context>Application Tools</RibbonTab>
      <RibbonEnd>
        <ChevronUp size={14} />
        <Help>?</Help>
      </RibbonEnd>
    </TabsRow>
    <Ribbon>
      <Group $w={262}>
        <GroupBody $pad="2px 0 0 8px">
          <Big $w={62} $mr={8} $dim><BigIcon><Pin /></BigIcon>Pin to Quick<br />access</Big>
          <Big $w={30} $mr={12}><BigIcon><Pages /></BigIcon>Copy</Big>
          <Big $w={30} $mr={12} $dim><BigIcon><Clipboard /></BigIcon>Paste</Big>
          <Stack $mt={1}>
            <Small><IconBox><Scissors /></IconBox>Cut</Small>
            <Small><IconBox><PathBadge /></IconBox>Copy path</Small>
            <Small $dim><IconBox><ShortcutDoc /></IconBox>Paste shortcut</Small>
          </Stack>
        </GroupBody>
        <GroupLabel>Clipboard</GroupLabel>
      </Group>
      <Group $w={166}>
        <GroupBody $pad="8px 0 0 10px">
          <Stack $w={67}>
            <Small $h={29} $gap={3}><MoveTo />Move to<Caret $ml={1} /></Small>
            <Small $h={29} $gap={3}><MoveTo copy />Copy to<Caret $ml={1} /></Small>
          </Stack>
          <InnerSep />
          <Stack>
            <Small $h={29} $gap={3}><DeleteMark size={17} strokeWidth={3.4} color="#e0242a" />Delete<Caret $ml={1} /></Small>
            <Small $h={29} $gap={3}><Rename />Rename</Small>
          </Stack>
        </GroupBody>
        <GroupLabel>Organize</GroupLabel>
      </Group>
      <Group $w={83}>
        <GroupBody $pad="2px 0 0 7px">
          <Big $w={35} $mr={7}><BigIcon><Folder size={29} /></BigIcon>New<br />folder</Big>
          <Stack $mt={2}>
            <Small $h={23} $gap={2}><NewItem /><Caret /></Small>
            <Small $h={23} $gap={2}><EasyAccess /><Caret /></Small>
          </Stack>
        </GroupBody>
        <GroupLabel>New</GroupLabel>
      </Group>
      <Group $w={134}>
        <GroupBody $pad="2px 0 0 3px">
          <Big $w={56} $mr={5}><BigIcon><PropsIcon /></BigIcon>Properties<Caret $mt={5} /></Big>
          <Stack $mt={1}>
            <Small $gap={3}><OpenWin />Open<Caret $ml={2} /></Small>
            <Small $gap={5} $dim><EditDoc />Edit</Small>
            <Small $gap={3}><HistoryIcon />History</Small>
          </Stack>
        </GroupBody>
        <GroupLabel>Open</GroupLabel>
      </Group>
      <Group $w={115}>
        <GroupBody $pad="2px 0 0 6px">
          <Stack $mt={1}>
            <Small $gap={3}><SelectGrid kind="all" />Select all</Small>
            <Small $gap={3}><SelectGrid kind="none" />Select none</Small>
            <Small $gap={3}><SelectGrid kind="inv" />Invert selection</Small>
          </Stack>
        </GroupBody>
        <GroupLabel>Select</GroupLabel>
      </Group>
    </Ribbon>
    <AddressRow>
      <ArrowBtn $w={38} $c="#c6c6c6"><ArrowLeft size={14} strokeWidth={1.3} /></ArrowBtn>
      <ArrowBtn $w={24} $c="#c6c6c6"><ArrowRight size={14} strokeWidth={1.3} /></ArrowBtn>
      <ArrowBtn $w={20} $c="#c6c6c6"><ChevronDown size={10} /></ArrowBtn>
      <ArrowBtn $w={20} $c="#555"><ArrowUp size={14} strokeWidth={1.6} /></ArrowBtn>
      <AddressBox>
        <DownloadArrow size={16} />
        {crumbs.map(c => (
          <React.Fragment key={c.label}>
            <CrumbArrow><ChevronRight size={9} strokeWidth={2.4} /></CrumbArrow>
            <Crumb $w={c.w}>{c.label}</Crumb>
          </React.Fragment>
        ))}
        <AddrEnd><ChevronDown size={13} strokeWidth={1.8} /></AddrEnd>
      </AddressBox>
      <RefreshBox><RotateCw size={12} strokeWidth={1.4} /></RefreshBox>
      <SearchBox>Search Downloads<Search size={12} strokeWidth={1.8} /></SearchBox>
    </AddressRow>
    <Main>
      <NavPane>
        {navItems.map((n, i) => (
          <NavItem key={i} $x={n.x} $selected={n.selected}>{n.icon}{n.label}</NavItem>
        ))}
      </NavPane>
      <NavScroll>
        <ChevronUp size={12} strokeWidth={2.4} />
        <NavThumbWrap><NavThumb /></NavThumbWrap>
        <ChevronDown size={12} strokeWidth={2.4} />
      </NavScroll>
      <Content>
        <SortMark><ChevronDown size={10} /></SortMark>
        <ColumnHeader>
          <ColCell $first>Name</ColCell>
          <ColCell>Date modified</ColCell>
          <ColCell>Type</ColCell>
          <ColCell>Size</ColCell>
        </ColumnHeader>
        <GroupHead $h={26} $mb={3}><ChevronDown size={13} color="#555" strokeWidth={1.4} />Today (1)</GroupHead>
        <FileRow $selected>
          <FileName $gap={3} $pl={3}><ExeGlyph>A</ExeGlyph>BVGSGV.exe</FileName>
          <FileDate>11/13/2024 2:08 PM</FileDate>
          <FileType>Application</FileType>
          <FileSize>2,267 KB</FileSize>
        </FileRow>
        <GroupHead $h={32}><ChevronDown size={13} color="#555" strokeWidth={1.4} />A long time ago (3)</GroupHead>
        {oldFiles.map(f => (
          <FileRow key={f.name}>
            <FileName $gap={6} $pl={5}><FileDoc />{f.name}</FileName>
            <FileDate>{f.date}</FileDate>
            <FileType>{f.type}</FileType>
            <FileSize>{f.size}</FileSize>
          </FileRow>
        ))}
        <HScroll>
          <HArrow><ChevronLeft size={12} strokeWidth={2.4} /></HArrow>
          <HThumb />
          <HArrow><ChevronRight size={12} strokeWidth={2.4} /></HArrow>
        </HScroll>
      </Content>
    </Main>
    <StatusBar>
      <StatusItem $w={59}>4 items</StatusItem>
      <StatusItem $w={85}>1 item selected</StatusItem>
      <StatusItem $w={60}>2.21 MB</StatusItem>
      <ViewToggles>
        <ViewBtn $active><DetailsView /></ViewBtn>
        <ViewBtn><LargeView /></ViewBtn>
      </ViewToggles>
    </StatusBar>
  </Window>
);

const TaskbarRow = () => (
  <Taskbar>
    <StartBtn><WindowsLogo /></StartBtn>
    <TaskSearch>
      <TaskSearchIcon size={17} strokeWidth={1.3} />
      <TaskSearchText>Type here to search</TaskSearchText>
      <PirateShip />
    </TaskSearch>
    <TaskBtn><TaskViewIcon /></TaskBtn>
    <TaskBtn $w={40} $ml={7} $open><EdgeIcon /></TaskBtn>
    <TaskBtn $ml={5} $active $open><FolderApp /></TaskBtn>
    <TaskBtn><FirefoxIcon /></TaskBtn>
    <Tray>
      <TrayIcon><ChevronUp size={17} strokeWidth={1.3} /></TrayIcon>
      <TrayIcon><MeetNow /></TrayIcon>
      <TrayIcon><NetworkIcon /></TrayIcon>
      <TrayIcon><VolumeIcon /></TrayIcon>
      <Clock>2:08 PM<br />11/13/2024</Clock>
      <NotifyBtn><NotifyIcon /></NotifyBtn>
    </Tray>
  </Taskbar>
);

export default function App() {
  return (
    <Screen>
      <Global />
      <Browser />
      <TaskbarRow />
      <Explorer />
    </Screen>
  );
}
